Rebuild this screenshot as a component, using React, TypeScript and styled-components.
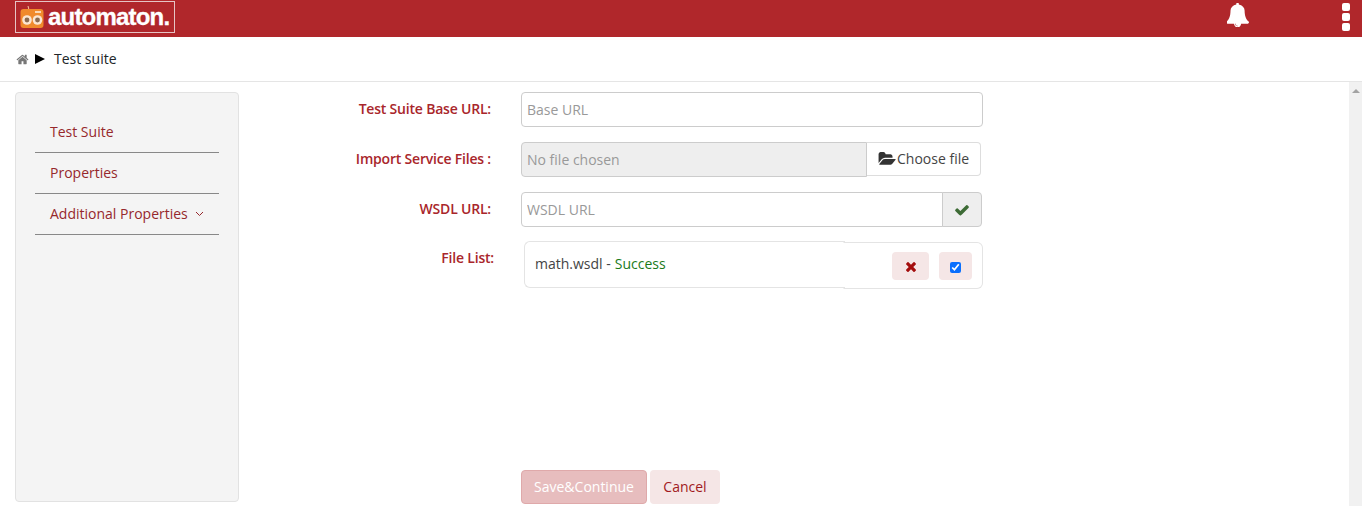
import React from "react";
import styled, { createGlobalStyle } from "styled-components";

const Global = createGlobalStyle`
  html, body { margin: 0; padding: 0; height: 100%; overflow: hidden; background: #fff; }
  #root { height: 100%; }
  * { box-sizing: border-box; }
  body { font-family: "Open Sans", "Liberation Sans", sans-serif; font-size: 14px; color: #333; }
  input::placeholder { color: #999; opacity: 1; }
`;

const ICONS = {
  home: { vb: "0 0 1792 1792", d: "M1472 992v480q0 26-19 45t-45 19h-384v-384H768v384H384q-26 0-45-19t-19-45V992q0-1 .5-3t.5-3l575-474 575 474q1 2 1 6zm223-69l-62 74q-8 9-21 11h-3q-13 0-21-7L896 424l-692 577q-12 8-24 7-13-2-21-11l-62-74q-8-10-7-23.500t11-21.500l719-599q32-26 76-26t76 26l244 204V288q0-14 9-23t23-9h192q14 0 23 9t9 23v408l219 182q10 8 11 21.500t-7 23.500z" },
  bell: { vb: "128 64 1600 1664", d: "M912 1696q0-16-16-16-59 0-101.500-42.500t-42.500-101.500q0-16-16-16t-16 16q0 73 51.500 124.500t124.500 51.500q16 0 16-16zm816-288q0 52-38 90t-90 38h-448q0 106-75 181t-181 75-181-75-75-181h-448q-52 0-90-38t-38-90q50-42 91-88t85-119.500 74.500-158.500 50-206 19.500-260q0-152 117-282.500t307-158.500q-8-19-8-39 0-40 28-68t68-28 68 28 28 68q0 20-8 39 190 28 307 158.500t117 282.500q0 139 19.500 260t50 206 74.500 158.500 85 119.500 91 88z" },
  folder: { vb: "0 128 1984 1536", d: "M1943 952q0 31-31 66l-336 396q-43 51-120.500 86.500t-143.500 35.500h-1088q-34 0-60.500-13t-26.500-43q0-31 31-66l336-396q43-51 120.500-86.500t143.500-35.500h1088q34 0 60.500 13t26.500 43zm-343-344v160h-832q-94 0-197 47.500t-164 119.500l-337 396-5 6q0-4-.5-12.500t-.5-12.500v-960q0-92 66-158t158-66h320q92 0 158 66t66 158v32h544q92 0 158 66t66 158z" },
  check: { vb: "0 0 1792 1792", d: "M1671 566q0 40-28 68l-724 724-136 136q-28 28-68 28t-68-28l-136-136-362-362q-28-28-28-68t28-68l136-136q28-28 68-28t68 28l294 295 656-657q28-28 68-28t68 28l136 136q28 28 28 68z" },
  remove: { vb: "0 0 1408 1792", d: "M1298 1322q0 40-28 68l-136 136q-28 28-68 28t-68-28l-294-294-294 294q-28 28-68 28t-68-28l-136-136q-28-28-28-68t28-68l294-294-294-294q-28-28-28-68t28-68l136-136q28-28 68-28t68 28l294 294 294-294q28-28 68-28t68 28l136 136q28 28 28 68t-28 68l-294 294 294 294q28 28 28 68z" },
};
const Icon = ({ name, w, h }: { name: keyof typeof ICONS; w: number; h: number }) => (
  <svg width={w} height={h} viewBox={ICONS[name].vb} fill="currentColor" style={{ display: "block", flex: "none" }}>
    <path d={ICONS[name].d} />
  </svg>
);

const Page = styled.div`
  display: flex;
  flex-direction: column;
  height: 506px;
`;
const Header = styled.header`
  flex: 0 0 37px;
  height: 37px;
  background: #b0272b;
  display: flex;
  align-items: flex-start;
  padding: 1px 12px 0 15px;
`;
const Logo = styled.div`
  width: 160px;
  height: 32px;
  border: 1px solid #e6c4c5;
  display: flex;
  align-items: center;
  padding-left: 4px;
  gap: 3px;
  flex: none;
`;
const LogoText = styled.span`
  font-family: "Liberation Sans", Arial, sans-serif;
  font-weight: 700;
  font-size: 24px;
  line-height: 30px;
  color: #fff;
  letter-spacing: -0.8px;
  -webkit-text-stroke: 0.3px #fff;
`;
const HeaderRight = styled.div`
  margin-left: auto;
  display: flex;
  align-items: flex-start;
`;
const Bell = styled.span`
  display: block;
  margin-top: 2px;
  margin-right: 93px;
  color: #fff;
`;
const Dots = styled.div`
  display: flex;
  flex-direction: column;
  gap: 2px;
  padding-top: 2px;
`;
const Dot = styled.span`
  width: 8px;
  height: 8px;
  border-radius: 2px;
  background: #fff;
`;
const Crumbs = styled.nav`
  flex: 0 0 45px;
  height: 45px;
  display: flex;
  align-items: center;
  padding: 0 0 2px 16px;
  border-bottom: 1px solid #e5e5e5;
  color: #212529;
`;
const HomeIcon = styled.span`
  display: flex;
  color: #777;
  margin: 2px 6px 0 0;
`;
const Arrow = styled.span`
  width: 0;
  height: 0;
  border-left: 10px solid #000;
  border-top: 5px solid transparent;
  border-bottom: 5px solid transparent;
  margin: 2px 9px 0 0;
`;
const Body = styled.div`
  flex: 1;
  display: flex;
  min-height: 0;
`;
const Content = styled.main`
  flex: 1;
  display: flex;
  align-items: flex-start;
  padding: 10px 0 0 15px;
  min-width: 0;
`;
const ScrollTrack = styled.div`
  flex: 0 0 13px;
  background: #f1f1f1;
  display: flex;
  justify-content: center;
  padding-top: 7px;
`;
const ScrollArrow = styled.span`
  width: 0;
  height: 0;
  border-left: 4px solid transparent;
  border-right: 4px solid transparent;
  border-bottom: 4px solid #a3a3a3;
`;
const Sidebar = styled.aside`
  width: 224px;
  height: 410px;
  flex: none;
  background: #f4f4f4;
  border: 1px solid #e2e2e2;
  border-radius: 4px;
  padding: 19px 19px 0;
`;
const SideItem = styled.div`
  height: 41px;
  border-bottom: 1px solid #888;
  color: #96282c;
  padding-left: 15px;
  display: flex;
  align-items: center;
  line-height: 20px;
  gap: 7px;
`;
const Form = styled.div`
  margin-left: 11px;
  width: 733px;
  height: 412px;
  display: flex;
  flex-direction: column;
`;
const Row = styled.div<{ $h: number; $mb: number }>`
  display: flex;
  height: ${(p) => p.$h}px;
  margin-bottom: ${(p) => p.$mb}px;
  flex: none;
`;
const Label = styled.label<{ $w?: number; $top?: number }>`
  width: ${(p) => p.$w ?? 241}px;
  flex: none;
  text-align: right;
  font-weight: 600;
  color: #a9262b;
  line-height: 20px;
  letter-spacing: -0.2px;
  padding-top: ${(p) => p.$top ?? 7}px;
`;
const Control = styled.div<{ $ml?: number }>`
  margin-left: ${(p) => p.$ml ?? 30}px;
  display: flex;
  align-items: flex-start;
`;
const TextInput = styled.input<{ $w: number; $joined?: boolean }>`
  width: ${(p) => p.$w}px;
  height: 35px;
  border: 1px solid #ccc;
  border-radius: ${(p) => (p.$joined ? "4px 0 0 4px" : "4px")};
  padding: 0 5px;
  font: inherit;
  color: #333;
  outline: none;
  background: #fff;
`;
const FileName = styled.div`
  width: 346px;
  height: 35px;
  background: #eee;
  border: 1px solid #ccc;
  border-radius: 4px 0 0 4px;
  color: #999;
  display: flex;
  align-items: center;
  padding: 0 5px;
`;
const ChooseBtn = styled.div`
  width: 114px;
  height: 34px;
  border: 1px solid #ddd;
  border-left: none;
  border-radius: 0 4px 4px 0;
  display: flex;
  align-items: center;
  padding: 0 0 1px 11px;
  gap: 1px;
  color: #444;
  background: #fff;
  & svg { color: #333; }
`;
const Addon = styled.div`
  width: 40px;
  height: 35px;
  margin-left: -1px;
  background: #eee;
  border: 1px solid #ccc;
  border-radius: 0 4px 4px 0;
  display: flex;
  align-items: center;
  justify-content: center;
  color: #3d6b35;
`;
const FileBox = styled.div`
  width: 321px;
  height: 47px;
  margin-top: -1px;
  border: 1px solid #e4e4e4;
  border-right: none;
  border-radius: 6px 0 0 6px;
  display: flex;
  align-items: center;
  padding: 0 10px 2px;
  color: #444;
`;
const Success = styled.span`
  color: #1a7a1a;
  margin-left: 4px;
`;
const FileActions = styled.div`
  width: 140px;
  height: 47px;
  margin-left: -2px;
  border: 1px solid #e4e4e4;
  border-radius: 0 6px 6px 0;
  border-left: 1px solid transparent;
  display: flex;
  align-items: center;
  justify-content: flex-end;
  gap: 10px;
  padding: 1px 10px 0 0;
`;
const ActionBtn = styled.div<{ $w: number }>`
  width: ${(p) => p.$w}px;
  height: 28px;
  background: #f5e6e6;
  border-radius: 4px;
  display: flex;
  align-items: center;
  justify-content: center;
  color: #a40d0d;
`;
const Check = styled.input`
  width: 11px;
  height: 11px;
  margin: 2px 0 0;
  accent-color: #0b6ffd;
`;
const Buttons = styled.div`
  margin-top: auto;
  margin-left: 271px;
  display: flex;
  gap: 3px;
`;
const Save = styled.button`
  width: 126px;
  height: 34px;
  background: #e7bdbe;
  border: 1px solid #dfa9aa;
  border-radius: 4px;
  color: #fff;
  font: inherit;
  padding: 0 0 2px;
`;
const Cancel = styled.button`
  width: 70px;
  height: 34px;
  background: #f5e6e6;
  border: none;
  border-radius: 4px;
  color: #a11a1e;
  font: inherit;
  padding: 0 0 2px;
`;

const RadioLogo = () => (
  <svg width="25" height="24" viewBox="0 0 25 24" style={{ flex: "none" }}>
    <path d="M9 5 L 8 1" stroke="#f6c8a0" strokeWidth="1" fill="none" />
    <rect x="0.5" y="4" width="23" height="19" rx="3" fill="#f08a2c" />
    <rect x="15" y="6" width="6" height="2" fill="#fbd9b5" />
    <circle cx="7" cy="15" r="4.8" fill="#fbe6d2" />
    <circle cx="17.5" cy="15" r="4.8" fill="#fbe6d2" />
    <circle cx="7" cy="15" r="2.4" fill="#8a6a50" />
    <circle cx="17.5" cy="15" r="2.4" fill="#8a6a50" />
  </svg>
);

export default function App() {
  return (
    <Page>
      <Global />
      <Header>
        <Logo>
          <RadioLogo />
          <LogoText>automaton.</LogoText>
        </Logo>
        <HeaderRight>
          <Bell><Icon name="bell" w={22} h={24} /></Bell>
          <Dots><Dot /><Dot /><Dot /></Dots>
        </HeaderRight>
      </Header>
      <Crumbs>
        <HomeIcon><Icon name="home" w={13} h={13} /></HomeIcon>
        <Arrow />
        <span>Test suite</span>
      </Crumbs>
      <Body>
        <Content>
          <Sidebar>
            <SideItem>Test Suite</SideItem>
            <SideItem>Properties</SideItem>
            <SideItem>
              Additional Properties
              <svg width="9" height="6" viewBox="0 0 9 6"><path d="M1 1l3.500 3.500L8 1" fill="none" stroke="#96282c" strokeWidth="1" /></svg>
            </SideItem>
          </Sidebar>
          <Form>
            <Row $h={35} $mb={15}>
              <Label>Test Suite Base URL:</Label>
              <Control><TextInput $w={462} placeholder="Base URL" /></Control>
            </Row>
            <Row $h={35} $mb={15}>
              <Label>Import Service Files :</Label>
              <Control>
                <FileName>No file chosen</FileName>
                <ChooseBtn><Icon name="folder" w={18} h={14} />Choose file</ChooseBtn>
              </Control>
            </Row>
            <Row $h={35} $mb={15}>
              <Label>WSDL URL:</Label>
              <Control>
                <TextInput $w={422} $joined placeholder="WSDL URL" />
                <Addon><Icon name="check" w={16} h={16} /></Addon>
              </Control>
            </Row>
            <Row $h={47} $mb={0}>
              <Label $w={244} $top={6}>File List:</Label>
              <Control>
                <FileBox>math.wsdl -<Success>Success</Success></FileBox>
                <FileActions>
                  <ActionBtn $w={37}><Icon name="remove" w={12} h={15} /></ActionBtn>
                  <ActionBtn $w={33}><Check type="checkbox" defaultChecked /></ActionBtn>
                </FileActions>
              </Control>
            </Row>
            <Buttons>
              <Save>Save&amp;Continue</Save>
              <Cancel>Cancel</Cancel>
            </Buttons>
          </Form>
        </Content>
        <ScrollTrack><ScrollArrow /></ScrollTrack>
      </Body>
    </Page>
  );
}
